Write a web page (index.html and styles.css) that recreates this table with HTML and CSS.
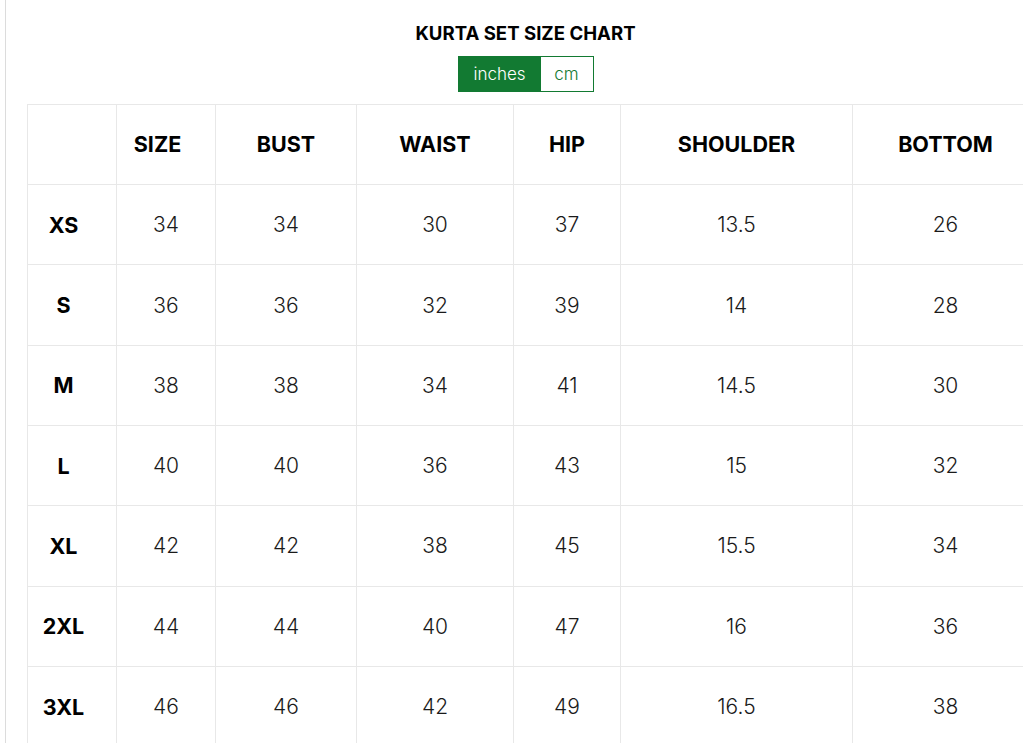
FILE: index.html
```html
<!DOCTYPE html>
<html>
<head>
<meta charset="utf-8">
<link rel="stylesheet" href="styles.css">
</head>
<body>
<div class="panel">
  <h1 class="title">KURTA SET SIZE CHART</h1>
  <div class="toggle">
    <span class="opt active">inches</span>
    <span class="opt">cm</span>
  </div>
  <div class="table-wrap">
    <table class="chart">
      <colgroup>
        <col class="c1"><col class="c2"><col class="c3"><col class="c4"><col class="c5"><col class="c6"><col class="c7">
      </colgroup>
      <thead>
        <tr><th class="first"></th><th class="sz">SIZE</th><th>BUST</th><th>WAIST</th><th>HIP</th><th>SHOULDER</th><th>BOTTOM</th></tr>
      </thead>
      <tbody>
        <tr><th class="first">XS</th><td>34</td><td>34</td><td>30</td><td>37</td><td>13.5</td><td>26</td></tr>
        <tr><th class="first">S</th><td>36</td><td>36</td><td>32</td><td>39</td><td>14</td><td>28</td></tr>
        <tr><th class="first">M</th><td>38</td><td>38</td><td>34</td><td>41</td><td>14.5</td><td>30</td></tr>
        <tr><th class="first">L</th><td>40</td><td>40</td><td>36</td><td>43</td><td>15</td><td>32</td></tr>
        <tr><th class="first">XL</th><td>42</td><td>42</td><td>38</td><td>45</td><td>15.5</td><td>34</td></tr>
        <tr><th class="first">2XL</th><td>44</td><td>44</td><td>40</td><td>47</td><td>16</td><td>36</td></tr>
        <tr><th class="first">3XL</th><td>46</td><td>46</td><td>42</td><td>49</td><td>16.5</td><td>38</td></tr>
      </tbody>
    </table>
  </div>
</div>
</body>
</html>
```

FILE: styles.css
```css
html, body {
  margin: 0;
  padding: 0;
  background: #fff;
  overflow: hidden;
}
body {
  font-family: Inter, "Liberation Sans", sans-serif;
  color: #111;
}
.panel {
  margin-left: 5px;
  border-left: 1px solid #dcdcdc;
  padding: 21px 0 0 21px;
  height: 743px;
  box-sizing: border-box;
  display: flex;
  flex-direction: column;
  align-items: center;
}
.title {
  margin: 0;
  font-size: 18.6px;
  font-weight: 700;
  line-height: 25px;
  color: #000;
  text-align: center;
  width: 996px;
}
.toggle {
  display: flex;
  margin-top: 10px;
  border: 1px solid #127a32;
  height: 36px;
  box-sizing: border-box;
}
.opt {
  display: flex;
  align-items: center;
  justify-content: center;
  font-size: 17px;
  font-weight: 300;
  color: #127a32;
}
.opt.active {
  background: #127a32;
  color: #fff;
  width: 82px;
}
.opt:not(.active) {
  width: 52px;
}
.table-wrap {
  align-self: flex-start;
  margin-top: 12px;
  width: 996px;
  overflow: hidden;
}
.chart {
  border-collapse: collapse;
  table-layout: fixed;
  width: 1011px;
}
.c1 { width: 89px; }
.c2 { width: 99px; }
.c3 { width: 141px; }
.c4 { width: 157px; }
.c5 { width: 107px; }
.c6 { width: 232px; }
.c7 { width: 186px; }
.chart th, .chart td {
  border: 1px solid #e8e8e8;
  height: 80.3px;
  padding: 0;
  text-align: center;
  box-sizing: border-box;
}
.chart th {
  font-size: 21.5px;
  font-weight: 700;
  color: #000;
}
.chart td {
  font-size: 21px;
  font-weight: 300;
  color: #1a1a1a;
}
.chart th.first {
  padding-right: 17px;
}
.chart th.sz {
  padding-right: 17px;
}
```
